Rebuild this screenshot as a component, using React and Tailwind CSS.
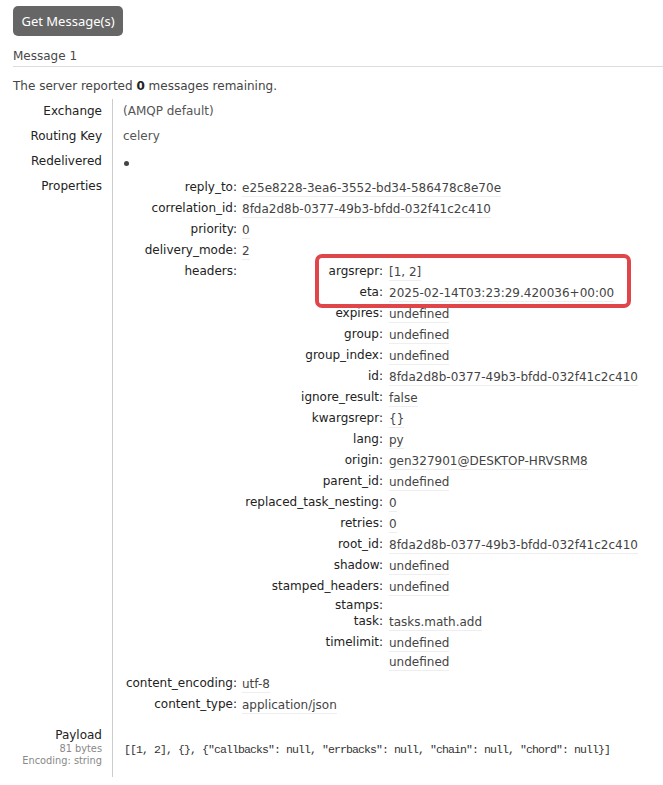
import React from "react";

const V = ({ children }) => (
  <span className="block leading-[15px] border-b border-[#eee] text-[#444] whitespace-nowrap">
    {children}
  </span>
);

function Row({ k, kw, gap, children, keyClass = "pt-[2px] pb-[4px]", valClass = "pt-[3px] pb-[2px]", rowClass = "" }) {
  return (
    <div className={"flex leading-[15px] " + rowClass}>
      <div className={"shrink-0 text-right leading-[15px] whitespace-nowrap text-[#222] " + kw + " " + keyClass}>{k}</div>
      <div className={"flex flex-col items-start leading-[15px] " + gap + " " + valClass}>{children}</div>
    </div>
  );
}

function HRow({ k, v }) {
  return (
    <Row k={k + ":"} kw="w-[141px]" gap="pl-[6px]">
      {v !== undefined ? <V>{v}</V> : null}
    </Row>
  );
}

function PRow({ k, v, children }) {
  return (
    <Row k={k + ":"} kw="w-[114px]" gap="pl-[5px]" valClass={children ? "" : "pt-[3px] pb-[2px]"}>
      {children ? children : <V>{v}</V>}
    </Row>
  );
}

export default function App() {
  const headers = [
    ["argsrepr", "[1, 2]"],
    ["eta", "2025-02-14T03:23:29.420036+00:00"],
    ["expires", "undefined"],
    ["group", "undefined"],
    ["group_index", "undefined"],
    ["id", "8fda2d8b-0377-49b3-bfdd-032f41c2c410"],
    ["ignore_result", "false"],
    ["kwargsrepr", "{}"],
    ["lang", "py"],
    ["origin", "gen327901@DESKTOP-HRVSRM8"],
    ["parent_id", "undefined"],
    ["replaced_task_nesting", "0"],
    ["retries", "0"],
    ["root_id", "8fda2d8b-0377-49b3-bfdd-032f41c2c410"],
    ["shadow", "undefined"],
    ["stamped_headers", "undefined"],
  ];

  return (
    <div className="relative min-h-[785px] bg-white pl-[13px] pt-[6px] text-[12px] leading-[15px] font-['DejaVu_Sans',sans-serif] text-[#333]">
      <button className="flex h-[30px] w-[110px] items-center justify-center rounded-[5px] bg-[#666] font-['Noto_Sans',sans-serif] text-[13px] text-white">
        Get Message(s)
      </button>

      <div className="mt-[13px] border-b border-[#ddd] pb-[2px] leading-[15px] text-[#484848]">Message 1</div>

      <p className="mt-[12px] leading-[15px] text-[#444]">
        The server reported <b className="text-[#222]">0</b> messages remaining.
      </p>

      <div className="mt-[5px] grid grid-cols-[99px_1fr]">
        <div className="pr-[10px] py-[5px] text-right leading-[15px] text-[#222]">Exchange</div>
        <div className="border-l border-[#ccc] pl-[10px] py-[5px] leading-[15px] text-[#555]">(AMQP default)</div>

        <div className="pr-[10px] py-[5px] text-right leading-[15px] text-[#222] whitespace-nowrap">Routing Key</div>
        <div className="border-l border-[#ccc] pl-[10px] py-[5px] leading-[15px] text-[#555]">celery</div>

        <div className="pr-[10px] py-[5px] text-right leading-[15px] text-[#222]">Redelivered</div>
        <div className="border-l border-[#ccc] pl-[11px] py-[5px]">
          <div className="flex h-[15px] items-center pt-[3px]">
            <span className="block h-[5px] w-[5px] rounded-full bg-[#444]" />
          </div>
        </div>

        <div className="pr-[10px] py-[5px] text-right leading-[15px] text-[#222]">Properties</div>
        <div className="border-l border-[#ccc] pl-[10px] pt-[4px] pb-[5px]">
          <PRow k="reply_to" v="e25e8228-3ea6-3552-bd34-586478c8e70e" />
          <PRow k="correlation_id" v="8fda2d8b-0377-49b3-bfdd-032f41c2c410" />
          <PRow k="priority" v="0" />
          <PRow k="delivery_mode" v="2" />
          <PRow k="headers">
            <div>
              {headers.map(([k, v]) => (
                <HRow key={k} k={k} v={v} />
              ))}
              <Row k="stamps:" kw="w-[141px]" gap="pl-[6px]" keyClass="pt-0" valClass="" rowClass="h-[14px]" />
              <HRow k="task" v="tasks.math.add" />
              <Row k="timelimit:" kw="w-[141px]" gap="pl-[6px]" valClass="pt-[3px] pb-[3px]">
                <div className="mb-[3px]">
                  <V>undefined</V>
                </div>
                <div>
                  <V>undefined</V>
                </div>
              </Row>
            </div>
          </PRow>
          <PRow k="content_encoding" v="utf-8" />
          <PRow k="content_type" v="application/json" />
        </div>

        <div className="pr-[10px] pt-[6px] pb-[10px] text-right">
          <div className="leading-[16px] text-[#222]">Payload</div>
          <div className="text-[9.8px] leading-[12px] text-[#888]">81 bytes</div>
          <div className="text-[9.8px] leading-[12px] text-[#888] whitespace-nowrap">Encoding: string</div>
        </div>
        <div className="flex items-center border-l border-[#ccc] pl-[11px]">
          <span className="whitespace-nowrap font-['Liberation_Mono',monospace] text-[11.5px] tracking-[-0.9px] text-[#333]">
            {'[[1, 2], {}, {"callbacks": null, "errbacks": null, "chain": null, "chord": null}]'}
          </span>
        </div>
      </div>

      <div className="pointer-events-none absolute left-[315px] top-[254px] h-[54px] w-[316px] rounded-[7px] border-[4px] border-[#e04549]" />
    </div>
  );
}
